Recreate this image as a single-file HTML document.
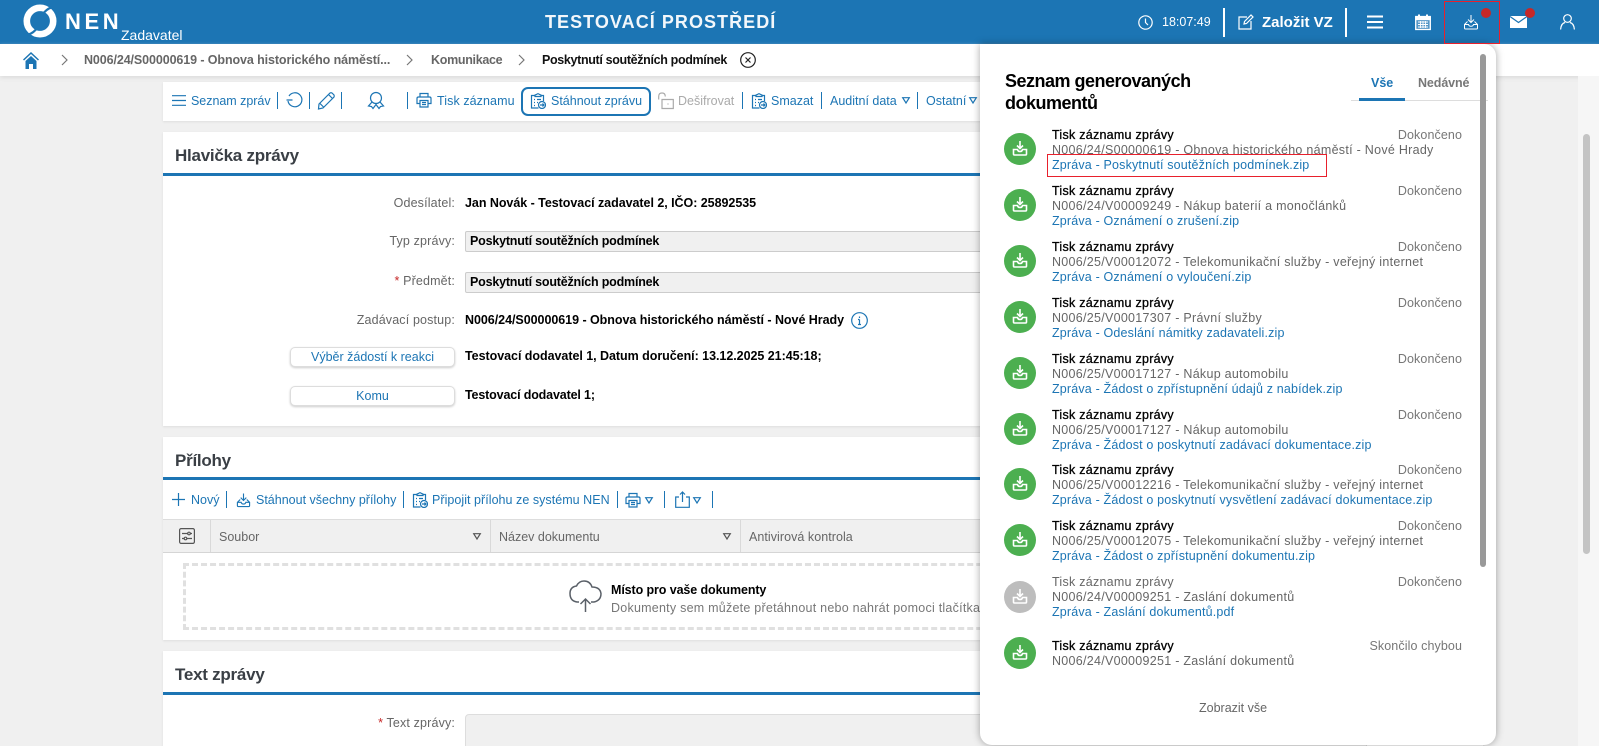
<!DOCTYPE html>
<html lang="cs"><head><meta charset="utf-8"><title>NEN</title>
<style>
html,body{margin:0;padding:0;width:1599px;height:746px;overflow:hidden;background:#f0f0f0;font-family:"Liberation Sans",sans-serif;font-size:12.5px;color:#000}
body{position:relative}
.a,.t{position:absolute;white-space:nowrap}
.t{line-height:16px}
svg{position:absolute;overflow:visible;fill:none;stroke:#1c75b4;stroke-width:1.2}
.b{color:#1c75b4}
.tb{margin-top:1px}
.sep{position:absolute;width:1px;height:17px;background:#1c75b4}
.w svg{stroke:#fff}
.lab{position:absolute;right:1144px;color:#666;line-height:16px;white-space:nowrap;letter-spacing:.15px}
.val{position:absolute;left:465px;font-weight:bold;line-height:16px;white-space:nowrap;letter-spacing:-.04px}
.inp{position:absolute;left:465px;width:900px;height:19px;background:#f0f0f0;border:1px solid #ccc;border-radius:2px;line-height:19px;font-weight:bold;padding-left:4px;letter-spacing:-.2px}
.btn{position:absolute;left:290px;width:163px;height:18px;line-height:19px;text-align:center;background:#fff;border:1px solid #ddd;border-radius:5px;box-shadow:0 1px 2px #ccc;color:#1c75b4}
.panel{position:absolute;left:163px;width:1320px;background:#fff;box-shadow:0 1px 2px #ddd}
.h2{position:absolute;left:175px;font-size:17px;letter-spacing:-.25px;font-weight:bold;color:#3a3f45;line-height:22px;white-space:nowrap}
.line{position:absolute;left:163px;width:1320px;height:3px;background:#1c75b4}
.it{position:absolute;left:1052px;width:410px;line-height:15px;color:#666;font-size:12.5px;margin-top:1px}
.it b{display:block;color:#000;font-weight:normal;-webkit-text-stroke:.3px #000;letter-spacing:.26px}
.it i{display:block;font-style:normal;color:#1c75b4;letter-spacing:.17px}
.it em{position:absolute;right:0;top:0;font-style:normal;color:#777;letter-spacing:.1px}
.it div{white-space:nowrap;letter-spacing:.28px}
.c{position:absolute;left:1004px;width:32px;height:32px;border-radius:50%;background:#4caf50}
.c svg{left:8px;top:7px;stroke:#fff;stroke-width:1.6}
</style></head><body>
<svg width="0" height="0" style="position:absolute"><defs>
<symbol id="dl" viewBox="0 0 16 16"><path d="M8 1v7.500M5 5.500l3 3 3-3M1.500 9.500V14q0 1 1 1h11q1 0 1-1V9.500h-4q-.5 2-2.500 2t-2.500-2z"/></symbol>
<symbol id="dl2" viewBox="0 0 16 16"><path d="M8 1v7.500M5 5.500l3 3 3-3M4.500 7.500L1.500 10.500V14q0 1 1 1h11q1 0 1-1V10.500L11.500 7.500M1.500 10.500h4q.5 1.800 2.500 1.800t2.500-1.800h4"/></symbol>
<symbol id="clip" viewBox="0 0 16 16"><path d="M5 2.500H1.500v12.500h7M11 2.500h2.500V8M5 3.500V2l1.500-.5q1.500-1.500 3 0L11 2v1.500zM4 6.500h1M7 6.500h4M4 9.500h1M7 9.500h1M4 12.500h1"/><circle cx="12" cy="12" r="3.500"/><path d="M10 12h4M12.500 10.500l1.500 1.500-1.500 1.500"/></symbol>
<symbol id="print" viewBox="0 0 16 16"><path d="M4 5V1.500h8V5M4 11.500H1V6.500q0-1.500 1.500-1.500h11q1.500 0 1.500 1.500v5h-3M4 8.500h8v6.500H4zM6 10.500h4M6 12.500h4"/></symbol>
</defs></svg>

<!-- header -->
<div class="a" style="left:0;top:0;width:1599px;height:44px;background:#1c75b4"></div>
<svg style="left:24px;top:4px" width="32" height="34" viewBox="0 0 32 34"><circle cx="16" cy="17" r="13.200" stroke="#fff" stroke-width="6.600"/><path d="M20 8.500Q25 3 31 3M12 25.500Q7 31 1 31" stroke="#1c75b4" stroke-width="2.200"/></svg>
<div class="a" style="left:65px;top:9px;font-size:22px;line-height:26px;font-weight:bold;color:#fff;letter-spacing:3.600px">NEN</div>
<div class="a" style="left:121px;top:27px;font-size:14px;line-height:16px;color:#fff">Zadavatel</div>
<div class="a" style="left:545px;top:11px;font-size:18px;line-height:22px;font-weight:bold;color:#fff;letter-spacing:1.050px;opacity:.95">TESTOVACÍ PROSTŘEDÍ</div>
<div class="w">
<svg style="left:1138px;top:15px" width="15" height="15" viewBox="0 0 15 15"><circle cx="7.500" cy="7.500" r="6.700"/><path d="M7.500 3.500v4l2.500 2.500"/></svg>
<div class="a" style="left:1162px;top:15px;font-size:12.500px;line-height:15px;color:#fff">18:07:49</div>
<div class="a" style="left:1223px;top:8px;width:2px;height:29px;background:#fff"></div>
<svg style="left:1238px;top:14px" width="16" height="16" viewBox="0 0 16 16"><path d="M9 3H1v12h12V7M6 10l.5-2.500L13 1l2 2-6.500 6.500z"/></svg>
<div class="a" style="left:1262px;top:14px;font-size:15px;line-height:17px;font-weight:bold;color:#fff">Založit VZ</div>
<div class="a" style="left:1345px;top:8px;width:2px;height:29px;background:#fff"></div>
<svg style="left:1367px;top:15px;stroke-width:2" width="16" height="14"><path d="M0 1.500h16M0 7h16M0 12.500h16"/></svg>
<svg style="left:1415px;top:14px;stroke-width:1.300" width="16" height="16" viewBox="0 0 16 16"><path d="M.7 2.500h14.600v13H.7z" fill="#fff" fill-opacity=".25"/><path d="M4 .5v3M12 .5v3" stroke-width="2"/><path d="M.7 3.500h14.600v2H.7z" fill="#fff"/><path d="M3 8h10M3 10.500h10M3 13h10M5.500 7v7M8 7v7M10.500 7v7" stroke-width=".9"/></svg>
<svg style="left:1463px;top:14px;stroke-width:1" width="16" height="16"><use href="#dl2"/></svg>
<div class="a" style="left:1481px;top:8px;width:10px;height:10px;border-radius:50%;background:#c62828"></div>
<svg style="left:1510px;top:16px" width="17" height="12" viewBox="0 0 17 12"><path d="M0 0h17v12H0z" fill="#fff" stroke="none"/><path d="M0 .5l8.500 6 8.500-6" stroke="#1c75b4"/></svg>
<div class="a" style="left:1525px;top:8px;width:10px;height:10px;border-radius:50%;background:#c62828"></div>
<svg style="left:1560px;top:14px" width="15" height="16" viewBox="0 0 15 16"><circle cx="7.500" cy="4.500" r="3.800"/><path d="M.6 15.500Q1 9.500 5 8.500M14.400 15.500Q14 9.500 10 8.500"/></svg>
</div>

<!-- breadcrumb -->
<div class="a" style="left:0;top:44px;width:1599px;height:32px;background:#fff;box-shadow:0 2px 4px #ddd"></div>
<svg style="left:23px;top:52px;stroke:none;fill:#1c75b4" width="16" height="17" viewBox="0 0 16 17"><path d="M8 0L0 7.500l1 1L8 2l7 6.500 1-1z"/><path d="M2.500 9L8 4l5.500 5v8H10v-5H6v5H2.500z"/></svg>
<svg style="left:61px;top:54px;stroke:#777" width="7" height="12"><path d="M1 1l5 5-5 5"/></svg>
<div class="t" style="left:84px;top:52px;font-weight:bold;color:#666;letter-spacing:-.1px">N006/24/S00000619 - Obnova historického náměstí...</div>
<svg style="left:406px;top:54px;stroke:#777" width="7" height="12"><path d="M1 1l5 5-5 5"/></svg>
<div class="t" style="left:431px;top:52px;font-weight:bold;color:#666;letter-spacing:-.3px">Komunikace</div>
<svg style="left:518px;top:54px;stroke:#777" width="7" height="12"><path d="M1 1l5 5-5 5"/></svg>
<div class="t" style="left:542px;top:52px;font-weight:bold;color:#111;letter-spacing:-.34px">Poskytnutí soutěžních podmínek</div>
<svg style="left:740px;top:52px;stroke:#222" width="16" height="16"><circle cx="8" cy="8" r="7.300"/><path d="M5.500 5.500l5 5M10.500 5.500l-5 5"/></svg>

<!-- toolbar -->
<div class="panel" style="top:82px;height:39px"></div>
<svg style="left:172px;top:95px" width="14" height="11"><path d="M0 .7h14M0 5.500h14M0 10.300h14"/></svg>
<div class="t b tb" style="left:191px;top:92px;letter-spacing:-.03px">Seznam zpráv</div>
<div class="sep" style="left:277px;top:92px"></div>
<svg style="left:286px;top:92px" width="17" height="16" viewBox="0 0 17 16"><path d="M3 4A7 7 0 1 1 2 9M.5 8h6"/></svg>
<div class="sep" style="left:309px;top:92px"></div>
<svg style="left:318px;top:92px" width="17" height="17" viewBox="0 0 17 17"><path d="M1 12L12 1q1-.5 2 0l2 2q.5 1 0 2L5 16l-4.500 1zM10.500 2.500l4 4M2 11.500l3.500 3.500"/></svg>
<div class="sep" style="left:341px;top:92px"></div>
<svg style="left:368px;top:92px" width="16" height="17" viewBox="0 0 16 17"><circle cx="8" cy="6" r="5.500"/><path d="M4 10L.5 14l3 .5L5 16.500l3-4 3 4 1.500-2 3-.5L12 10"/></svg>
<div class="sep" style="left:407px;top:92px"></div>
<svg style="left:416px;top:92px" width="16" height="16"><use href="#print"/></svg>
<div class="t b tb" style="left:437px;top:92px;letter-spacing:.08px">Tisk záznamu</div>
<div class="a" style="left:521px;top:87px;width:126px;height:25px;border:2px solid #1c75b4;border-radius:7px"></div>
<svg style="left:530px;top:93px" width="16" height="16"><use href="#clip"/></svg>
<div class="t b tb" style="left:551px;top:92px">Stáhnout zprávu</div>
<svg style="left:658px;top:92px;stroke:#aaa" width="16" height="17" viewBox="0 0 16 17"><path d="M.7 7.500V4.500Q.7 1 4 1t3.300 3.500M4 7.500h11.300v9H4z"/><path d="M9.500 12h1"/></svg>
<div class="t tb" style="left:678px;top:92px;color:#aaa">Dešifrovat</div>
<div class="sep" style="left:742px;top:92px"></div>
<svg style="left:751px;top:93px" width="16" height="16"><use href="#clip"/></svg>
<div class="t b tb" style="left:771px;top:92px">Smazat</div>
<div class="sep" style="left:821px;top:92px"></div>
<div class="t b tb" style="left:830px;top:92px">Auditní data</div>
<svg style="left:902px;top:97px" width="8" height="7"><path d="M.7.7h6.600L4 6z"/></svg>
<div class="sep" style="left:917px;top:92px"></div>
<div class="t b tb" style="left:926px;top:92px">Ostatní</div>
<svg style="left:969px;top:97px" width="8" height="7"><path d="M.7.7h6.600L4 6z"/></svg>

<!-- panel 1 -->
<div class="panel" style="top:132px;height:294px"></div>
<div class="h2" style="top:145px">Hlavička zprávy</div>
<div class="line" style="top:173px"></div>
<div class="lab" style="top:195px">Odesílatel:</div>
<div class="val" style="top:195px">Jan Novák - Testovací zadavatel 2, IČO: 25892535</div>
<div class="lab" style="top:233px">Typ zprávy:</div>
<div class="inp" style="top:231px">Poskytnutí soutěžních podmínek</div>
<div class="lab" style="top:273px"><span style="color:#c62828">*</span> Předmět:</div>
<div class="inp" style="top:272px">Poskytnutí soutěžních podmínek</div>
<div class="lab" style="top:312px">Zadávací postup:</div>
<div class="val" style="top:312px">N006/24/S00000619 - Obnova historického náměstí - Nové Hrady</div>
<svg style="left:851px;top:312px" width="17" height="17"><circle cx="8.500" cy="8.500" r="7.800"/><path d="M8.500 7.500v5M8.500 4.500v1.500M7 7.500h1.500M7 12.500h3"/></svg>
<div class="btn" style="top:347px">Výběr žádostí k reakci</div>
<div class="val" style="top:348px">Testovací dodavatel 1, Datum doručení: 13.12.2025 21:45:18;</div>
<div class="btn" style="top:386px">Komu</div>
<div class="val" style="top:387px;letter-spacing:-.15px">Testovací dodavatel 1;</div>

<!-- panel 2 -->
<div class="panel" style="top:437px;height:203px"></div>
<div class="h2" style="top:450px">Přílohy</div>
<div class="line" style="top:477px"></div>
<svg style="left:172px;top:493px" width="13" height="13"><path d="M6.500 0v13M0 6.500h13"/></svg>
<div class="t b" style="left:191px;top:492px">Nový</div>
<div class="sep" style="left:226px;top:491px"></div>
<svg style="left:236px;top:492px" width="15" height="16"><use href="#dl2"/></svg>
<div class="t b" style="left:256px;top:492px">Stáhnout všechny přílohy</div>
<div class="sep" style="left:403px;top:491px"></div>
<svg style="left:412px;top:492px" width="16" height="16"><use href="#clip"/></svg>
<div class="t b" style="left:432px;top:492px;letter-spacing:.04px">Připojit přílohu ze systému NEN</div>
<div class="sep" style="left:617px;top:491px"></div>
<svg style="left:625px;top:492px" width="16" height="16"><use href="#print"/></svg>
<svg style="left:645px;top:497px" width="8" height="7"><path d="M.7.7h6.600L4 6z"/></svg>
<div class="sep" style="left:664px;top:491px"></div>
<svg style="left:675px;top:491px" width="15" height="17" viewBox="0 0 15 17"><path d="M4 6H.7v10.300h13.600V6H11M7.500 11V1M5 3.500L7.500 1 10 3.500"/></svg>
<svg style="left:693px;top:497px" width="8" height="7"><path d="M.7.7h6.600L4 6z"/></svg>
<div class="sep" style="left:712px;top:491px"></div>
<div class="a" style="left:163px;top:519px;width:1320px;height:32px;background:#f0f0f0;border-top:1px solid #ddd;border-bottom:1px solid #d5d5d5"></div>
<div class="a" style="left:210px;top:520px;width:1px;height:32px;background:#d9d9d9"></div>
<div class="a" style="left:490px;top:520px;width:1px;height:32px;background:#d9d9d9"></div>
<div class="a" style="left:740px;top:520px;width:1px;height:32px;background:#d9d9d9"></div>
<svg style="left:179px;top:528px;stroke:#555" width="16" height="16"><rect x=".6" y=".6" width="14.800" height="14.800" rx="1.500"/><path d="M3 5.500h6M11 5.500h2M3 10.500h2M8 10.500h5"/><circle cx="10" cy="5.500" r="1.300"/><circle cx="6.500" cy="10.500" r="1.300"/></svg>
<div class="t" style="left:219px;top:529px;color:#666">Soubor</div>
<svg style="left:473px;top:533px;stroke:#555" width="8" height="7"><path d="M.7.700h6.600L4 6z"/></svg>
<div class="t" style="left:499px;top:529px;color:#666">Název dokumentu</div>
<svg style="left:723px;top:533px;stroke:#555" width="8" height="7"><path d="M.7.700h6.600L4 6z"/></svg>
<div class="t" style="left:749px;top:529px;color:#666;letter-spacing:.05px">Antivirová kontrola</div>
<div class="a" style="left:183px;top:563px;width:1280px;height:61px;border:3px dashed #e0e0e0"></div>
<svg style="left:569px;top:580px;stroke:#5a6068;stroke-width:1.500" width="33" height="32" viewBox="0 0 33 32"><path d="M10 22H8Q1 21 1 13.500 1 7 7.500 6 10 1 15 1q6 0 8 6 8 0 9 6.500 0 7-7 8.500h-3M16.500 32V19M11.500 24l5-5 5 5"/></svg>
<div class="t" style="left:611px;top:582px;font-weight:bold;letter-spacing:-.1px">Místo pro vaše dokumenty</div>
<div class="t" style="left:611px;top:600px;color:#777;letter-spacing:.24px">Dokumenty sem můžete přetáhnout nebo nahrát pomoci tlačítka</div>

<!-- panel 3 -->
<div class="panel" style="top:651px;height:95px"></div>
<div class="h2" style="top:664px">Text zprávy</div>
<div class="line" style="top:692px"></div>
<div class="lab" style="top:715px"><span style="color:#c62828">*</span> Text zprávy:</div>
<div class="a" style="left:465px;top:714px;width:900px;height:40px;background:#f0f0f0;border:1px solid #ddd;border-radius:4px"></div>

<!-- page scrollbar -->
<div class="a" style="left:1578px;top:76px;width:21px;height:670px;background:#f6f6f6"></div>
<div class="a" style="left:1583px;top:134px;width:7px;height:420px;border-radius:4px;background:#c4c4c4"></div>

<!-- popup -->
<div class="a" style="left:980px;top:44px;width:516px;height:701px;background:#fff;border-radius:0 12px 12px 12px;box-shadow:0 0 8px rgba(0,0,0,.35)"></div>
<div class="a" style="left:1005px;top:70px;font-size:18px;line-height:22px;font-weight:bold;letter-spacing:-.5px">Seznam generovaných<br>dokumentů</div>
<div class="t" style="left:1371px;top:75px;font-weight:bold;color:#1c75b4">Vše</div>
<div class="t" style="left:1418px;top:75px;font-weight:bold;color:#777;letter-spacing:-.1px">Nedávné</div>
<div class="a" style="left:1351px;top:100px;width:137px;height:1px;background:#ddd"></div>
<div class="a" style="left:1359px;top:98px;width:46px;height:3px;background:#1c75b4"></div>
<div class="a" style="left:1480px;top:54px;width:6px;height:513px;border-radius:3px;background:#999"></div>

<div class="c" style="top:133px"><svg width="16" height="16"><use href="#dl"/></svg></div>
<div class="it" style="top:127px"><em>Dokončeno</em><b>Tisk záznamu zprávy</b><div>N006/24/S00000619 - Obnova historického náměstí - Nové Hrady</div><i>Zpráva - Poskytnutí soutěžních podmínek.zip</i></div>
<div class="c" style="top:189px"><svg width="16" height="16"><use href="#dl"/></svg></div>
<div class="it" style="top:183px"><em>Dokončeno</em><b>Tisk záznamu zprávy</b><div>N006/24/V00009249 - Nákup baterií a monočlánků</div><i>Zpráva - Oznámení o zrušení.zip</i></div>
<div class="c" style="top:245px"><svg width="16" height="16"><use href="#dl"/></svg></div>
<div class="it" style="top:239px"><em>Dokončeno</em><b>Tisk záznamu zprávy</b><div>N006/25/V00012072 - Telekomunikační služby - veřejný internet</div><i>Zpráva - Oznámení o vyloučení.zip</i></div>
<div class="c" style="top:301px"><svg width="16" height="16"><use href="#dl"/></svg></div>
<div class="it" style="top:295px"><em>Dokončeno</em><b>Tisk záznamu zprávy</b><div>N006/25/V00017307 - Právní služby</div><i>Zpráva - Odeslání námitky zadavateli.zip</i></div>
<div class="c" style="top:357px"><svg width="16" height="16"><use href="#dl"/></svg></div>
<div class="it" style="top:351px"><em>Dokončeno</em><b>Tisk záznamu zprávy</b><div>N006/25/V00017127 - Nákup automobilu</div><i>Zpráva - Žádost o zpřístupnění údajů z nabídek.zip</i></div>
<div class="c" style="top:413px"><svg width="16" height="16"><use href="#dl"/></svg></div>
<div class="it" style="top:407px"><em>Dokončeno</em><b>Tisk záznamu zprávy</b><div>N006/25/V00017127 - Nákup automobilu</div><i>Zpráva - Žádost o poskytnutí zadávací dokumentace.zip</i></div>
<div class="c" style="top:468px"><svg width="16" height="16"><use href="#dl"/></svg></div>
<div class="it" style="top:462px"><em>Dokončeno</em><b>Tisk záznamu zprávy</b><div>N006/25/V00012216 - Telekomunikační služby - veřejný internet</div><i>Zpráva - Žádost o poskytnutí vysvětlení zadávací dokumentace.zip</i></div>
<div class="c" style="top:524px"><svg width="16" height="16"><use href="#dl"/></svg></div>
<div class="it" style="top:518px"><em>Dokončeno</em><b>Tisk záznamu zprávy</b><div>N006/25/V00012075 - Telekomunikační služby - veřejný internet</div><i>Zpráva - Žádost o zpřístupnění dokumentu.zip</i></div>
<div class="c" style="top:581px;background:#bdbdbd"><svg width="16" height="16"><use href="#dl"/></svg></div>
<div class="it" style="top:574px"><em>Dokončeno</em><b style="color:#666;-webkit-text-stroke:0">Tisk záznamu zprávy</b><div>N006/24/V00009251 - Zaslání dokumentů</div><i>Zpráva - Zaslání dokumentů.pdf</i></div>
<div class="c" style="top:637px"><svg width="16" height="16"><use href="#dl"/></svg></div>
<div class="it" style="top:638px"><em>Skončilo chybou</em><b>Tisk záznamu zprávy</b><div>N006/24/V00009251 - Zaslání dokumentů</div></div>
<div class="a" style="left:1047px;top:154px;width:278px;height:21px;border:1px solid #e8202c"></div>
<div class="t" style="left:1199px;top:700px;color:#666">Zobrazit vše</div>
<div class="a" style="left:1444px;top:1px;width:54px;height:41px;border:1px solid #e8202c"></div>
</body></html>
